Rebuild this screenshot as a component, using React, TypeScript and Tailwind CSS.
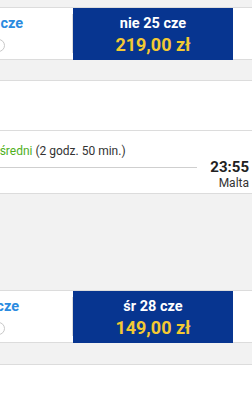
const line = "border-[#dcdcdc]";

function DateStrip({ prev, day, price }: { prev: string; day: string; price: string }) {
  return (
    <div className={`flex h-[53px] bg-white border-t ${line}`}>
      {/* previous day, mostly scrolled out of view */}
      <div className={`w-[169px] shrink-0 -ml-[96px] flex flex-col border-b ${line} py-[6px]`}>
        <div className={`flex-1 flex flex-col border-r ${line}`}>
          <div className="pt-[3px] text-center text-[14.5px] leading-[14px] font-bold text-[#2b8be0]">{prev}</div>
          <div className="mt-[8px] ml-[88px] w-[13px] h-[13px] rounded-full border border-[#c8c8c8]" />
        </div>
      </div>
      <div className="w-[160px] shrink-0 bg-[#073590] flex flex-col items-center pt-[9px]">
        <div className="text-[14.5px] leading-[14.5px] font-bold text-white">{day}</div>
        <div className="mt-[4px] text-[18px] leading-[18px] font-bold text-[#f3c933]">{price}</div>
      </div>
      <div className={`flex-1 border-b ${line}`} />
    </div>
  );
}

export default function App() {
  return (
    <div className="w-[252px] h-[401px] overflow-hidden bg-[#f2f2f2] font-['Roboto',sans-serif]">
      <div className="h-[7px]" />
      <DateStrip prev="sob 24 cze" day="nie 25 cze" price="219,00 zł" />
      <div className="h-[20px]" />

      <div className={`h-[50px] bg-white border-t ${line}`} />

      {/* flight details */}
      <div className={`flex h-[64px] bg-white border-y ${line}`}>
        <div className="flex-1 -ml-[33px] pt-[12px] min-w-0">
          <div className="text-[12px] leading-[16px] text-[#333] whitespace-nowrap">
            <span className="text-[#4fb01c]">bezpośredni</span> (2 godz. 50 min.)
          </div>
          <div className="mt-[8px] h-px bg-[#cfcfcf]" />
        </div>
        <div className="w-[55px] shrink-0 pr-[3px] pt-[27px] text-right">
          <div className="text-[15px] leading-[18px] font-bold text-[#222]">23:55</div>
          <div className="text-[12px] leading-[15px] text-[#333]">Malta</div>
        </div>
      </div>

      <div className="h-[96px]" />
      <DateStrip prev="wt 27 cze" day="śr 28 cze" price="149,00 zł" />
      <div className="h-[21px]" />
      <div className={`h-[40px] bg-white border-t ${line}`} />
    </div>
  );
}
